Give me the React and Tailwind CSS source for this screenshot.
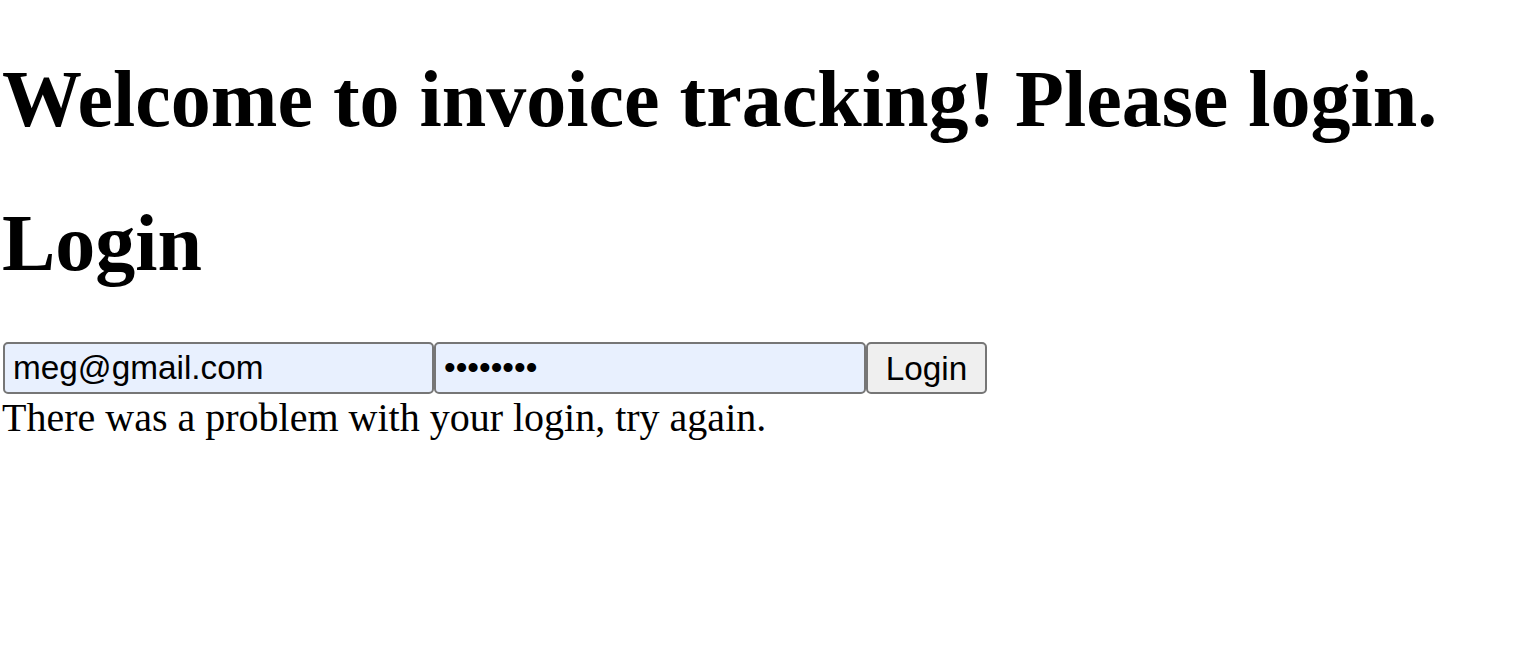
// App.jsx
const App = () => {
  return (
    <div className="min-h-screen bg-white text-black font-['Liberation_Serif',serif] pt-[53px] pl-[2px]">
      <h1 className="mb-[52px] text-[80px] leading-[92px] font-bold">
        Welcome to invoice tracking! Please login.
      </h1>
      <h1 className="mb-[53px] text-[80px] leading-[92px] font-bold">Login</h1>

      <form className="flex items-stretch h-[52px] pl-[1px]" onSubmit={(e) => e.preventDefault()}>
        <input
          type="email"
          readOnly
          value="meg@gmail.com"
          className="w-[431px] h-[52px] px-[8px] border-2 border-[#767676] rounded-[5px] bg-[#e8f0fe] text-black text-[33.33px] font-['Liberation_Sans',Arial,sans-serif] outline-none"
        />
        <input
          type="password"
          readOnly
          value="password"
          className="w-[432px] h-[52px] px-[8px] border-2 border-[#767676] rounded-[5px] bg-[#e8f0fe] text-black text-[33.33px] font-['Liberation_Sans',Arial,sans-serif] outline-none"
        />
        <button
          type="submit"
          className="w-[121px] h-[52px] border-2 border-[#767676] rounded-[5px] bg-[#efefef] text-black text-[33.33px] font-['Liberation_Sans',Arial,sans-serif]"
        >
          Login
        </button>
      </form>

      <div className="mt-[2px] text-[40px] leading-[44px]">
        There was a problem with your login, try again.
      </div>
    </div>
  );
};

export default App;
